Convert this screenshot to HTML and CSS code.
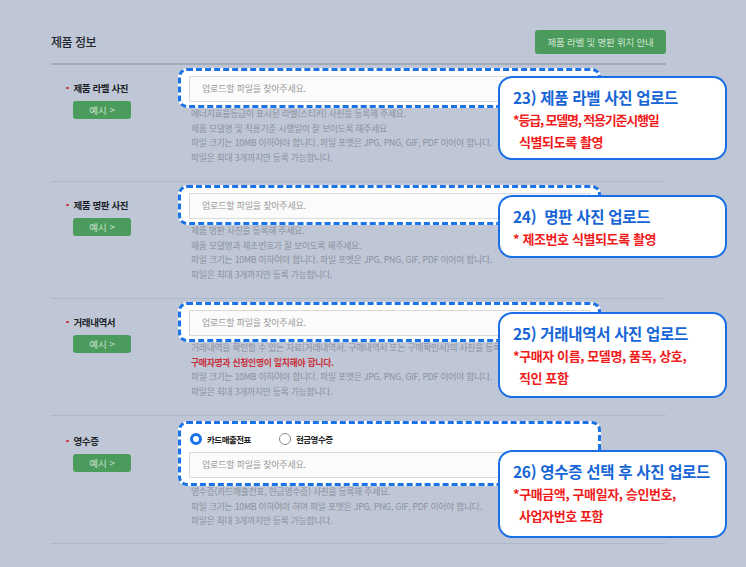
FILE: index.html
```html
<!DOCTYPE html>
<html lang="ko">
<head>
<meta charset="utf-8">
<title>제품 정보</title>
<link rel="stylesheet" href="styles.css">
</head>
<body>
<div class="page">
  <header class="head">
    <h2 class="title">제품 정보</h2>
    <button class="guide-btn">제품 라벨 및 명판 위치 안내</button>
  </header>

  <section class="row">
    <div class="label-col">
      <div class="label">제품 라벨 사진</div>
      <button class="ex-btn">예시 &gt;</button>
    </div>
    <div class="field">
      <div class="spot"><div class="file-input">업로드할 파일을 찾아주세요.</div></div>
      <ul class="help">
        <li>에너지효율등급이 표시된 라벨(스티커) 사진을 등록해 주세요.</li>
        <li>제품 모델명 및 적용기준 시행일이 잘 보이도록 해주세요</li>
        <li>파일 크기는 10MB 이하여야 합니다. 파일 포멧은 JPG, PNG, GIF, PDF 이어야 합니다.</li>
        <li>파일은 최대 3개까지만 등록 가능합니다.</li>
      </ul>
    </div>
    <div class="callout c1">
      <div class="co-title">23) 제품 라벨 사진 업로드</div>
      <div class="co-note tight">*등급, 모델명, 적용기준시행일</div>
      <div class="co-note indent">식별되도록 촬영</div>
    </div>
  </section>

  <section class="row">
    <div class="label-col">
      <div class="label">제품 명판 사진</div>
      <button class="ex-btn">예시 &gt;</button>
    </div>
    <div class="field">
      <div class="spot"><div class="file-input">업로드할 파일을 찾아주세요.</div></div>
      <ul class="help">
        <li>제품 명판 사진을 등록해 주세요.</li>
        <li>제품 모델명과 제조번호가 잘 보이도록 해주세요.</li>
        <li>파일 크기는 10MB 이하여야 합니다. 파일 포멧은 JPG, PNG, GIF, PDF 이어야 합니다.</li>
        <li>파일은 최대 3개까지만 등록 가능합니다.</li>
      </ul>
    </div>
    <div class="callout c2">
      <div class="co-title">24)&nbsp; 명판 사진 업로드</div>
      <div class="co-note">* 제조번호 식별되도록 촬영</div>
    </div>
  </section>

  <section class="row">
    <div class="label-col">
      <div class="label">거래내역서</div>
      <button class="ex-btn">예시 &gt;</button>
    </div>
    <div class="field">
      <div class="spot"><div class="file-input">업로드할 파일을 찾아주세요.</div></div>
      <ul class="help">
        <li>거래내역을 확인할 수 있는 자료(거래내역서, 구매내역서 또는 구매확인서)의 사진을 등록해 주세요.</li>
        <li class="warn">구매자명과 신청인명이 일치해야 합니다.</li>
        <li>파일 크기는 10MB 이하여야 합니다. 파일 포멧은 JPG, PNG, GIF, PDF 이어야 합니다.</li>
        <li>파일은 최대 3개까지만 등록 가능합니다.</li>
      </ul>
    </div>
    <div class="callout c3">
      <div class="co-title">25) 거래내역서 사진 업로드</div>
      <div class="co-note">*구매자 이름, 모델명, 품목, 상호,</div>
      <div class="co-note indent">직인 포함</div>
    </div>
  </section>

  <section class="row last">
    <div class="label-col">
      <div class="label">영수증</div>
      <button class="ex-btn">예시 &gt;</button>
    </div>
    <div class="field">
      <div class="spot tall">
        <div class="radios">
          <label class="radio"><span class="dot on"></span>카드매출전표</label>
          <label class="radio"><span class="dot"></span>현금영수증</label>
        </div>
        <div class="file-input">업로드할 파일을 찾아주세요.</div>
      </div>
      <ul class="help">
        <li>영수증(카드매출전표, 현금영수증) 사진을 등록해 주세요.</li>
        <li>파일 크기는 10MB 이하여야 하며 파일 포멧은 JPG, PNG, GIF, PDF 이어야 합니다.</li>
        <li>파일은 최대 3개까지만 등록 가능합니다.</li>
      </ul>
    </div>
    <div class="callout c4">
      <div class="co-title">26) 영수증 선택 후 사진 업로드</div>
      <div class="co-note">*구매금액, 구매일자, 승인번호,</div>
      <div class="co-note indent">사업자번호 포함</div>
    </div>
  </section>
</div>
</body>
</html>
```

FILE: styles.css
```css
* { box-sizing: border-box; }

body {
  margin: 0;
  background: #bfc7d6;
  font-family: "Noto Sans CJK KR", "Noto Sans", sans-serif;
}

.page {
  width: 615px;
  margin-left: 51px;
  padding-top: 30px;
}

.head {
  display: flex;
  justify-content: space-between;
  align-items: center;
  padding-bottom: 9px;
  border-bottom: 2px solid #a3abba;
}

.title {
  margin: 0;
  font-size: 12px;
  font-weight: 500;
  line-height: 24px;
  letter-spacing: -0.5px;
  color: #23262d;
}

.guide-btn {
  width: 131px;
  height: 24px;
  padding: 0;
  border: 0;
  border-radius: 3px;
  background: #4b9b5c;
  color: #cfe3d2;
  font-family: inherit;
  font-size: 9.5px;
  letter-spacing: -0.2px;
}

.row {
  position: relative;
  display: grid;
  grid-template-columns: 138px 1fr;
  padding: 3px 0 16px;
  border-bottom: 1px solid #b0b8c7;
}
.row.last { padding: 5px 0 14px; }

.label-col { padding-top: 13px; }

.label {
  display: flex;
  align-items: center;
  gap: 5px;
  margin-left: 15px;
  font-size: 9.5px;
  font-weight: 700;
  line-height: 14px;
  letter-spacing: -0.4px;
  color: #1c1f26;
}
.label::before {
  content: "";
  width: 2.5px;
  height: 2.5px;
  border-radius: 50%;
  background: #c8323a;
}

.ex-btn {
  display: block;
  width: 58px;
  height: 18px;
  margin: 6px 0 0 22px;
  padding: 0;
  border: 0;
  border-radius: 3px;
  background: #4b9b5c;
  color: #cfe3d2;
  font-family: inherit;
  font-size: 9.5px;
  line-height: 18px;
}

.field { min-width: 0; }

.spot {
  position: relative;
  z-index: 1;
  width: 423px;
  margin-left: -11px;
  padding: 5px 8px 3px;
  border: 3px dashed #1a73e8;
  border-radius: 9px;
  background: #fff;
}
.spot.tall { padding-bottom: 5px; }

.file-input {
  height: 26px;
  padding-left: 12px;
  border: 1px solid #dadada;
  background: #fbfbfb;
  color: #9a9a9a;
  font-size: 9px;
  line-height: 24px;
  letter-spacing: -0.2px;
}

.radios {
  display: flex;
  align-items: center;
  gap: 28px;
  height: 20px;
  margin-bottom: 3px;
  padding-left: 1px;
}
.radio {
  display: flex;
  align-items: center;
  gap: 5px;
  font-size: 8.5px;
  font-weight: 700;
  letter-spacing: -0.5px;
  color: #222;
}
.dot {
  width: 12px;
  height: 12px;
  border-radius: 50%;
  border: 1px solid #8a8a8a;
  background: #fff;
}
.dot.on { border: 3px solid #1a73e8; }

.help {
  margin: -1px 0 0 2px;
  padding: 0;
  list-style: none;
  font-size: 8.8px;
  line-height: 14.5px;
  letter-spacing: -0.25px;
  color: #8b919d;
  white-space: nowrap;
}
.help .warn { color: #c9303a; font-weight: 700; }

.callout {
  position: absolute;
  z-index: 2;
  left: 447px;
  width: 229px;
  padding: 9px 0 0 13px;
  border: 2px solid #1a6fe6;
  border-radius: 14px;
  background: #fff;
}
.c1 { top: 11px; height: 84px; }
.c2 { top: 13px; height: 63px; }
.c3 { top: 13px; height: 86px; }
.c4 { top: 34px; height: 88px; }

.co-title {
  font-size: 15.5px;
  font-weight: 700;
  line-height: 20px;
  letter-spacing: -0.3px;
  color: #1565d6;
  white-space: nowrap;
}
.co-note {
  font-size: 13px;
  font-weight: 700;
  line-height: 22px;
  letter-spacing: -0.4px;
  color: #f01c1c;
  white-space: nowrap;
}
.co-note.tight { letter-spacing: -1.2px; }
.co-title + .co-note { margin-top: 2px; }
.co-note.indent { padding-left: 6px; }
```
